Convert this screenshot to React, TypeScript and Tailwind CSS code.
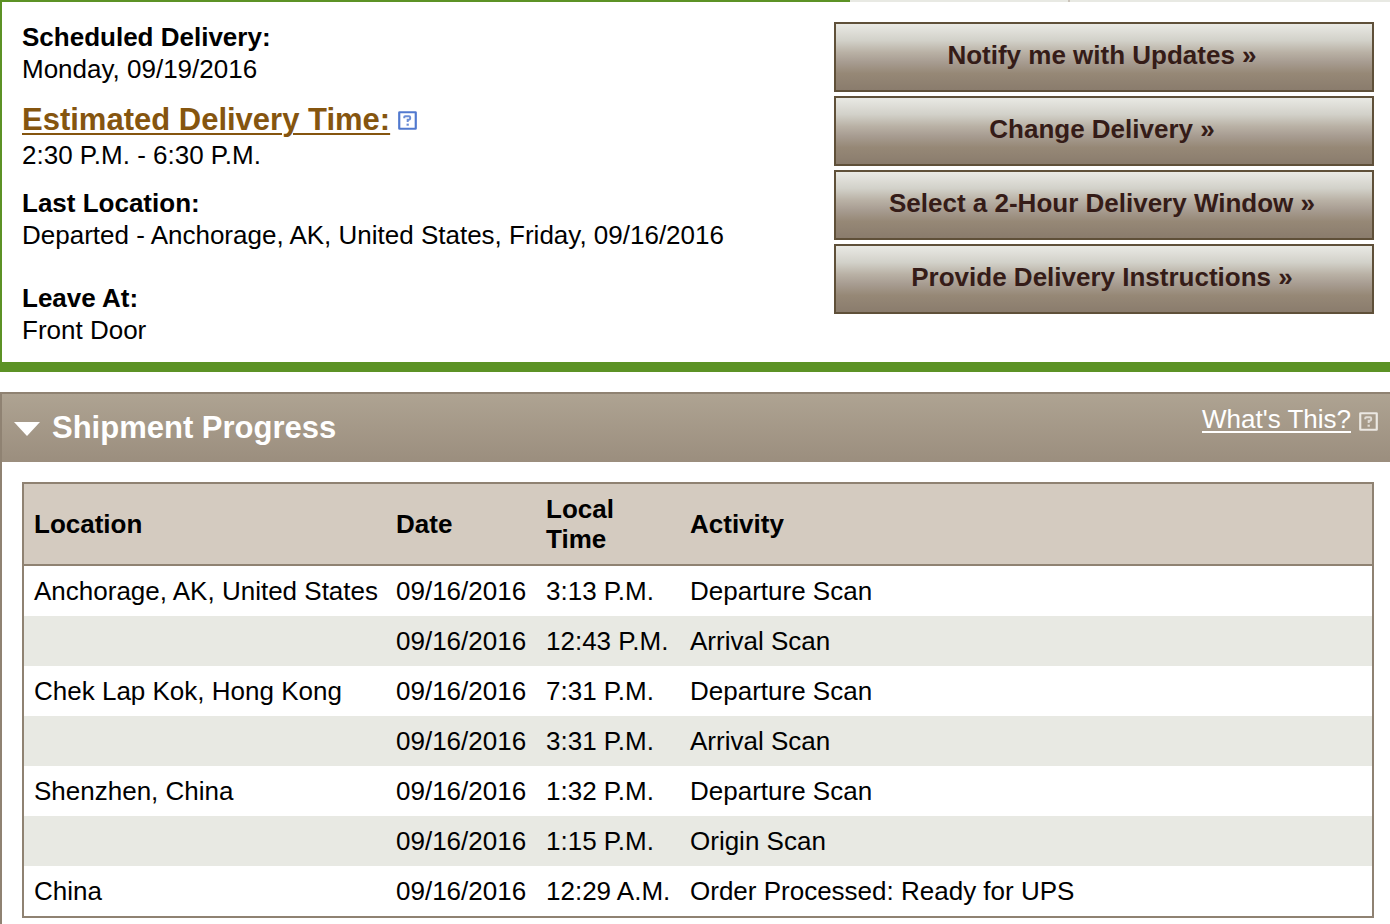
const actions = [
  "Notify me with Updates »",
  "Change Delivery »",
  "Select a 2-Hour Delivery Window »",
  "Provide Delivery Instructions »",
]

const scans = [
  { location: "Anchorage, AK, United States", date: "09/16/2016", time: "3:13 P.M.", activity: "Departure Scan" },
  { location: "", date: "09/16/2016", time: "12:43 P.M.", activity: "Arrival Scan" },
  { location: "Chek Lap Kok, Hong Kong", date: "09/16/2016", time: "7:31 P.M.", activity: "Departure Scan" },
  { location: "", date: "09/16/2016", time: "3:31 P.M.", activity: "Arrival Scan" },
  { location: "Shenzhen, China", date: "09/16/2016", time: "1:32 P.M.", activity: "Departure Scan" },
  { location: "", date: "09/16/2016", time: "1:15 P.M.", activity: "Origin Scan" },
  { location: "China", date: "09/16/2016", time: "12:29 A.M.", activity: "Order Processed: Ready for UPS" },
]

function HelpIcon({ className }: { className: string }) {
  return (
    <svg viewBox="0 0 20 20" className={className} fill="none" stroke="currentColor" aria-hidden="true">
      <rect x="1.3" y="1.3" width="17.4" height="17.4" rx="0.4" strokeWidth="2.3" />
      <path d="M6.6 7.6V6.4Q6.6 5.6 7.6 5.6H11.6Q12.8 5.6 12.8 6.8V8Q12.8 9.2 11.6 9.2H10.2V11.6" strokeWidth="2.1" opacity="0.85" />
      <path d="M9 14.4H11.4" strokeWidth="2.2" opacity="0.85" />
    </svg>
  )
}

export default function App() {
  return (
    <div className="min-h-screen bg-white font-['Liberation_Sans',Arial,sans-serif] text-[26px] leading-8 text-black">
      {/* bottom edge of the tab strip */}
      <div className="flex h-0.5">
        <div className="w-[850px] bg-[#5c9225]" />
        <div className="w-[218px] bg-[#e8e9e3]" />
        <div className="w-0.5 bg-[#cbc4ba]" />
        <div className="flex-1 bg-[#e8e9e3]" />
      </div>

      <section className="flex items-start justify-between border-b-10 border-l-2 border-[#5c9225] pr-4 pb-4 pl-5">
        <dl className="pt-[19px]">
          <dt className="font-bold">Scheduled Delivery:</dt>
          <dd>Monday, 09/19/2016</dd>
          <dt className="mt-4 flex items-center gap-2 text-[31px] leading-[38px] font-bold">
            <a href="#estimated" className="text-[#85550f] underline decoration-2 underline-offset-3">
              Estimated Delivery Time:
            </a>
            <HelpIcon className="size-[19px] text-[#5179cf]" />
          </dt>
          <dd>2:30 P.M. - 6:30 P.M.</dd>
          <dt className="mt-4 font-bold">Last Location:</dt>
          <dd>Departed - Anchorage, AK, United States, Friday, 09/16/2016</dd>
          <dt className="mt-[31px] font-bold">Leave At:</dt>
          <dd>Front Door</dd>
        </dl>

        <div className="flex w-[540px] flex-col gap-1 pt-5">
          {actions.map((label) => (
            <button
              key={label}
              type="button"
              className="h-[70px] border-2 border-[#5f5039] bg-[linear-gradient(#e9e9e4,#d2d1c9_25%,#b9b1a5_43%,#a89d92_57%,#968876_75%,#8a7c6d)] pr-1 pb-1 font-bold text-[#351c18]"
            >
              {label}
            </button>
          ))}
        </div>
      </section>

      <section className="mt-5 border-t-2 border-l-2 border-[#8f8272]">
        <header className="flex h-[68px] items-start justify-between bg-linear-to-b from-[#aea392] to-[#9b8e7e] px-3 text-white">
          <h2 className="mt-4 flex items-center gap-3 text-[31px] leading-9 font-bold">
            <svg viewBox="0 0 26 16" className="h-4 w-[26px]" fill="currentColor" aria-hidden="true">
              <path d="M0 2H26L13 16Z" />
            </svg>
            Shipment Progress
          </h2>
          <a href="#help" className="mt-[9px] flex items-end gap-2">
            <span className="underline decoration-2 underline-offset-3">What's This?</span>
            <HelpIcon className="mb-1 size-[19px] text-[#ebe8e3]" />
          </a>
        </header>

        <div className="pt-5 pr-4 pb-2 pl-5">
          <table className="w-full table-fixed border-separate border-spacing-0 border-2 border-[#8f8272] text-left leading-[30px]">
            <thead className="bg-[#d4cbc0]">
              <tr>
                <th className="w-[362px] border-b-2 border-[#8f8272] p-2.5">Location</th>
                <th className="w-[150px] border-b-2 border-[#8f8272] p-2.5">Date</th>
                <th className="w-36 border-b-2 border-[#8f8272] p-2.5">
                  Local
                  <br />
                  Time
                </th>
                <th className="border-b-2 border-[#8f8272] p-2.5">Activity</th>
              </tr>
            </thead>
            <tbody>
              {scans.map((scan, i) => (
                <tr key={i} className="whitespace-nowrap even:bg-[#e8e9e3]">
                  <td className="p-2.5">{scan.location}</td>
                  <td className="p-2.5">{scan.date}</td>
                  <td className="p-2.5">{scan.time}</td>
                  <td className="p-2.5">{scan.activity}</td>
                </tr>
              ))}
            </tbody>
          </table>
        </div>
      </section>
    </div>
  )
}
